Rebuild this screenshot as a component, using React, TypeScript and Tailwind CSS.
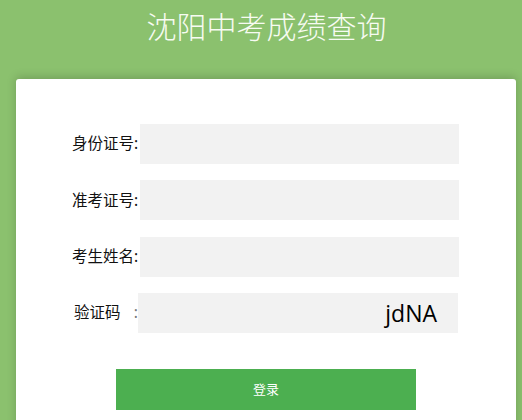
const rows = [
  { label: "身份证号", name: "sfz" },
  { label: "准考证号", name: "zkz" },
  { label: "考生姓名", name: "xm" },
];

export default function App() {
  return (
    <div className="h-[420px] overflow-hidden bg-[#8bc16e] px-4 pt-[5px] font-['Noto_Sans','Noto_Sans_CJK_SC',sans-serif]">
      <h1 className="pl-[11px] text-center font-['Liberation_Serif','Noto_Sans_CJK_SC',serif] text-[30px] font-light leading-[45px] text-[#f7fbf2]">
        沈阳中考成绩查询
      </h1>

      <div className="mt-[29px] h-[400px] w-[500px] rounded-[3px] bg-white pt-[45px] shadow-[0_-2px_10px_rgba(0,0,0,0.18)]">
        <div className="flex flex-col gap-[16.3px] pl-[56px]">
          {rows.map((r) => (
            <div key={r.name} className="flex items-center">
              <label className="w-[68px] whitespace-nowrap text-[15.5px] text-[#111]">
                {r.label}:
              </label>
              <input
                name={r.name}
                className="h-10 w-[319px] bg-[#f2f2f2] px-2 outline-none"
              />
            </div>
          ))}
          <div className="flex items-center">
            <label className="flex w-[66px] justify-between whitespace-nowrap pl-[2px] text-[15.5px] text-[#111]">
              <span>验证码</span>
              <span className="text-[#777]">:</span>
            </label>
            <div className="flex h-10 w-[320px] items-center justify-end bg-[#f2f2f2] pr-[21px]">
              <span className="font-['Open_Sans',sans-serif] text-[23px] text-black">jdNA</span>
            </div>
          </div>
        </div>

        <div className="mt-9 flex justify-center">
          <button
            type="button"
            className="h-[41px] w-[300px] bg-[#4caf50] text-[13px] text-white"
          >
            登录
          </button>
        </div>
      </div>
    </div>
  );
}
